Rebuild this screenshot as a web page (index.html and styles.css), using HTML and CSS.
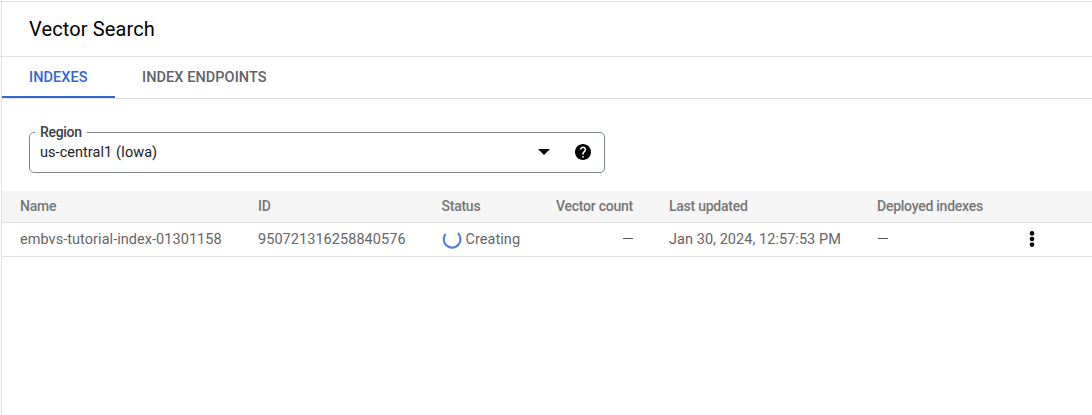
FILE: index.html
```html
<!DOCTYPE html>
<html lang="en">
<head>
<meta charset="utf-8">
<title>Vector Search</title>
<link rel="stylesheet" href="styles.css">
</head>
<body>
<main class="page">
  <header class="page-header"><h1 class="title"><span>Vector Search</span></h1></header>
  <nav class="tabs">
    <a class="tab tab-active"><span>INDEXES</span></a>
    <a class="tab"><span>INDEX ENDPOINTS</span></a>
  </nav>
  <div class="field">
    <span class="field-label">Region</span>
    <span class="field-value">us-central1 (Iowa)</span>
    <svg class="caret" width="12" height="6" viewBox="0 0 12 6"><path d="M0 0h12L6 6z"/></svg>
    <svg class="help" width="16" height="16" viewBox="2 2 20 20"><path d="M12 2C6.48 2 2 6.48 2 12s4.48 10 10 10 10-4.48 10-10S17.52 2 12 2zm1 17h-2v-2h2v2zm2.07-7.75l-.9.92C13.45 12.9 13 13.5 13 15h-2v-.5c0-1.1.45-2.1 1.17-2.83l1.24-1.26c.37-.36.59-.86.59-1.41 0-1.1-.9-2-2-2s-2 .9-2 2H8c0-2.21 1.79-4 4-4s4 1.79 4 4c0 .88-.36 1.68-.93 2.25z"/></svg>
  </div>
  <div class="table">
    <div class="row row-head">
      <span>Name</span><span>ID</span><span>Status</span><span class="num">Vector count</span><span>Last updated</span><span>Deployed indexes</span><span></span>
    </div>
    <div class="row row-body">
      <span>embvs-tutorial-index-01301158</span><span>950721316258840576</span>
      <span class="status"><svg width="20" height="20" viewBox="0 0 20 20"><path d="M3.5 5A8.4 8.4 0 1 0 15.8 4"/></svg><span>Creating</span></span>
      <span class="num"><i class="dash"></i></span><span>Jan 30, 2024, 12:57:53 PM</span><span><i class="dash"></i></span>
      <svg class="more" width="6" height="16" viewBox="0 0 6 16"><circle cx="3" cy="2.4" r="2.3"/><circle cx="3" cy="8" r="2.3"/><circle cx="3" cy="13.6" r="2.3"/></svg>
    </div>
  </div>
</main>
</body>
</html>
```
FILE: styles.css
```css
* { box-sizing: border-box; }
body { margin: 0; background: #fff; font-family: Roboto, sans-serif; }
.page { height: 415px; padding-top: 1px; display: flex; flex-direction: column; background: linear-gradient(#e0e0e0, #e0e0e0) 1px 0 / 1px 100% no-repeat; }
.page-header { height: 56px; border-top: 1px solid #e0e0e0; border-bottom: 1px solid #e0e0e0; padding-left: 29px; display: flex; align-items: center; }
.title { margin: 0; font-size: 20px; font-weight: 400; line-height: 24px; color: #000; letter-spacing: 0.12px; }
.tabs { height: 42px; margin-left: 2px; display: flex; border-bottom: 1px solid #e0e0e0; }
.tab { padding: 0 27px; display: flex; align-items: center; font-size: 14.5px; font-weight: 500; letter-spacing: 0.06px; color: #5f6368; }
.tab-active { width: 113px; color: #3367d6; box-shadow: inset 0 -2px #3367d6; }
.field { position: relative; width: 576px; height: 41px; margin: 33px 0 0 29px; padding: 0 13px 1px 10px; border: 1px solid #80868b; border-radius: 5px; display: flex; align-items: center; color: #202124; font-size: 14.5px; letter-spacing: 0.05px; }
.field-label { position: absolute; left: 5px; top: -9px; padding: 0 5px; background: #fff; font-size: 14px; font-weight: 500; line-height: 16px; letter-spacing: -0.3px; color: #3c4043; }
.field-value { flex: 1; }
.caret { margin-right: 25px; fill: #000; }
.help { fill: #000; }
.table { margin: 18px 0 0 2px; }
.row { display: grid; grid-template-columns: 238px 183.5px 93.5px 98px 36px 208px 152px 1fr; padding-left: 18px; align-items: center; border-bottom: 1px solid #e0e0e0; font-size: 14.5px; letter-spacing: 0.05px; color: #666; white-space: nowrap; }
.row > :nth-child(5) { grid-column: 6; }
.row > :nth-child(6) { grid-column: 7; }
.row > :nth-child(7) { grid-column: 8; }
.row-head { height: 32px; padding-bottom: 2px; background: #f5f5f5; font-size: 14px; font-weight: 500; letter-spacing: -0.25px; color: #757575; }
.row-body { height: 34px; padding-bottom: 1px; }
.num { justify-self: end; }
.status { display: flex; align-items: center; gap: 4px; }
.status path { fill: none; stroke: #5282e0; stroke-width: 2.2; }
.dash { display: block; width: 10px; height: 1px; margin: 0 0 2px 1px; background: #555; }
.more { fill: #000; }
```
